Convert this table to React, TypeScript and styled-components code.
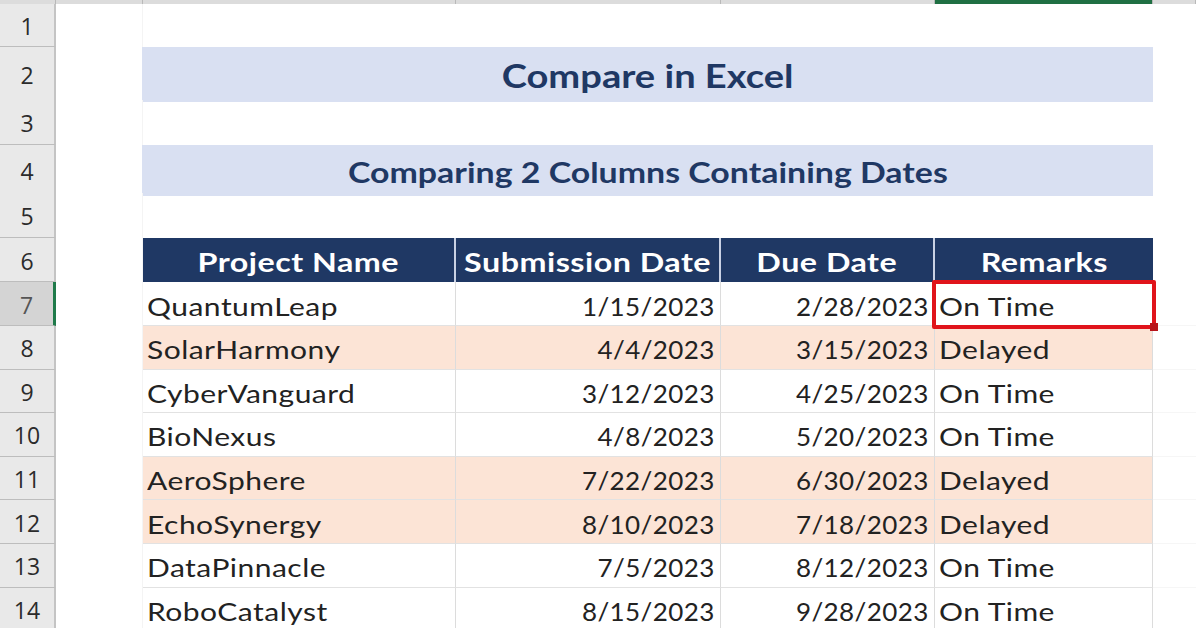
import React from "react";
import styled, { createGlobalStyle } from "styled-components";

const Global = createGlobalStyle`
  html, body { margin: 0; padding: 0; background: #ffffff; }
  body { width: 1196px; height: 628px; overflow: hidden; font-family: Lato, "Open Sans", sans-serif; }
`;

const COLS = "56px 87px 313px 265px 214px 218px 1fr";

const Sheet = styled.div`
  display: flex;
  flex-direction: column;
  width: 1196px;
  height: 628px;
  overflow: hidden;
  background: #fff;
`;

const ColHeaderStrip = styled.div`
  display: grid;
  grid-template-columns: ${COLS};
  height: 4px;
  flex: none;
`;

const ColHead = styled.div<{ $selected?: boolean }>`
  background: ${(p) => (p.$selected ? "#1f6f43" : "#dcdcdc")};
  border-right: 1px solid #b9b9b9;
`;

const Row = styled.div<{ $h: number }>`
  display: grid;
  grid-template-columns: ${COLS};
  height: ${(p) => p.$h}px;
  flex: none;
`;

const RowHead = styled.div<{ $active?: boolean }>`
  display: flex;
  align-items: center;
  justify-content: center;
  padding-top: 2px;
  font-family: "Open Sans", Lato, sans-serif;
  font-size: 23px;
  color: ${(p) => (p.$active ? "#555" : "#2b2b2b")};
  background: ${(p) => (p.$active ? "#d4d4d4" : "#e9e9e9")};
  border-bottom: 1.5px solid #bdbdbd;
  border-right: ${(p) => (p.$active ? "3px solid #1f7a4a" : "2px solid #c4c4c4")};
  box-sizing: border-box;
`;

const Blank = styled.div`
  border-right: 1px solid #f4f4f4;
`;

const Wide = styled.span<{ $sx: number; $origin?: string }>`
  display: inline-block;
  transform: scaleX(${(p) => p.$sx});
  transform-origin: ${(p) => p.$origin ?? "center"};
  white-space: nowrap;
`;

const Band = styled.div<{ $size: number }>`
  grid-column: 3 / 7;
  align-self: center;
  height: ${(p) => (p.$size > 29 ? 55 : 51)}px;
  margin-left: -1px;
  background: #d9e0f2;
  color: #1f3864;
  font-weight: 700;
  font-size: ${(p) => p.$size}px;
  display: flex;
  align-items: center;
  justify-content: center;
  padding-top: 2px;
  box-sizing: border-box;
`;

const HeadCell = styled.div`
  background: #1f3864;
  color: #fff;
  font-weight: 700;
  font-size: 26px;
  letter-spacing: 0.4px;
  display: flex;
  align-items: center;
  justify-content: center;
  padding-top: 3px;
  box-sizing: border-box;
  border-right: 2px solid #c9d1e4;
  &:nth-child(6) { border-right: none; }
`;

const Cell = styled.div<{ $late?: boolean; $right?: boolean }>`
  position: relative;
  display: flex;
  align-items: center;
  justify-content: ${(p) => (p.$right ? "flex-end" : "flex-start")};
  padding: 4px ${(p) => (p.$right ? "5px" : "0")} 0 ${(p) => (p.$right ? "0" : "4px")};
  font-size: 25px;
  color: #222;
  letter-spacing: 0.4px;
  background: ${(p) => (p.$late ? "#fce4d6" : "#fff")};
  border-right: 1.5px solid #dcdcdc;
  border-bottom: 1.5px solid #e2e2e2;
  box-sizing: border-box;
  white-space: nowrap;
`;

const Selection = styled.div`
  position: absolute;
  z-index: 5;
  left: -3px;
  top: -2px;
  right: -4px;
  bottom: -4px;
  border: 4px solid #e0141b;
  border-radius: 2px;
  pointer-events: none;
  &::after {
    content: "";
    position: absolute;
    right: -6px;
    bottom: -6px;
    width: 8px;
    height: 8px;
    background: #b8141a;
  }
`;

const Filler = styled.div`
  border-bottom: 1px solid #f6f6f6;
`;

type Rec = { name: string; sub: string; due: string; remark: string };

const data: Rec[] = [
  { name: "QuantumLeap", sub: "1/15/2023", due: "2/28/2023", remark: "On Time" },
  { name: "SolarHarmony", sub: "4/4/2023", due: "3/15/2023", remark: "Delayed" },
  { name: "CyberVanguard", sub: "3/12/2023", due: "4/25/2023", remark: "On Time" },
  { name: "BioNexus", sub: "4/8/2023", due: "5/20/2023", remark: "On Time" },
  { name: "AeroSphere", sub: "7/22/2023", due: "6/30/2023", remark: "Delayed" },
  { name: "EchoSynergy", sub: "8/10/2023", due: "7/18/2023", remark: "Delayed" },
  { name: "DataPinnacle", sub: "7/5/2023", due: "8/12/2023", remark: "On Time" },
  { name: "RoboCatalyst", sub: "8/15/2023", due: "9/28/2023", remark: "On Time" },
];

const headers = ["Project Name", "Submission Date", "Due Date", "Remarks"];

export default function App() {
  return (
    <Sheet>
      <Global />
      <ColHeaderStrip>
        <ColHead />
        <ColHead />
        <ColHead />
        <ColHead />
        <ColHead />
        <ColHead $selected />
        <ColHead />
      </ColHeaderStrip>
      <Row $h={43}>
        <RowHead>1</RowHead>
        <Blank />
      </Row>
      <Row $h={53}>
        <RowHead>2</RowHead>
        <Blank />
        <Band $size={32}>
          <Wide $sx={1.19}>Compare in Excel</Wide>
        </Band>
      </Row>
      <Row $h={45}>
        <RowHead>3</RowHead>
        <Blank />
      </Row>
      <Row $h={48}>
        <RowHead>4</RowHead>
        <Blank />
        <Band $size={28}>
          <Wide $sx={1.21}>Comparing 2 Columns Containing Dates</Wide>
        </Band>
      </Row>
      <Row $h={45}>
        <RowHead>5</RowHead>
        <Blank />
      </Row>
      <Row $h={44}>
        <RowHead>6</RowHead>
        <Blank />
        {headers.map((h) => (
          <HeadCell key={h}>
            <Wide $sx={1.24}>{h}</Wide>
          </HeadCell>
        ))}
      </Row>
      {data.map((r, i) => {
        const late = r.remark === "Delayed";
        return (
          <Row $h={i === 0 ? 44 : 43.6} key={r.name}>
            <RowHead $active={i === 0}>{i + 7}</RowHead>
            <Blank />
            <Cell $late={late}>
              <Wide $sx={1.2} $origin="left">{r.name}</Wide>
            </Cell>
            <Cell $late={late} $right>
              <Wide $sx={1.04} $origin="right">{r.sub}</Wide>
            </Cell>
            <Cell $late={late} $right>
              <Wide $sx={1.04} $origin="right">{r.due}</Wide>
            </Cell>
            <Cell $late={late}>
              <Wide $sx={1.2} $origin="left">{r.remark}</Wide>
              {i === 0 && <Selection />}
            </Cell>
            <Filler />
          </Row>
        );
      })}
    </Sheet>
  );
}
